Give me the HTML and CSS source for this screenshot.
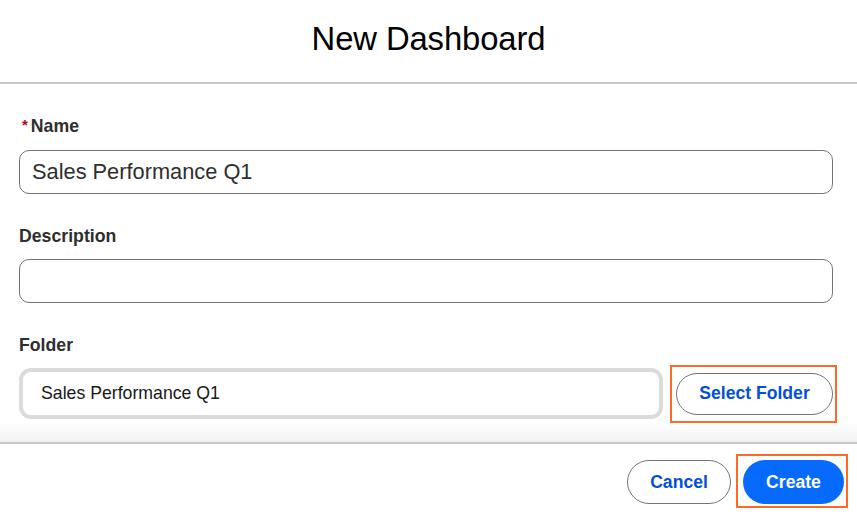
FILE: index.html
```html
<!DOCTYPE html>
<html lang="en">
<head>
<meta charset="utf-8">
<title>New Dashboard</title>
<link rel="stylesheet" href="styles.css">
</head>
<body>
<div class="modal">
  <header class="modal-header">
    <h1 class="modal-title">New Dashboard</h1>
  </header>
  <div class="modal-body">
    <div class="field">
      <label class="label"><abbr class="required">*</abbr>Name</label>
      <div class="input">Sales Performance Q1</div>
    </div>
    <div class="field">
      <label class="label">Description</label>
      <div class="input"></div>
    </div>
    <div class="field">
      <label class="label">Folder</label>
      <div class="folder-row">
        <div class="folder-input">Sales Performance Q1</div>
        <div class="highlight hl-select">
          <button class="btn btn-neutral btn-select">Select Folder</button>
        </div>
      </div>
    </div>
  </div>
  <footer class="modal-footer">
    <button class="btn btn-neutral btn-cancel">Cancel</button>
    <div class="highlight hl-create">
      <button class="btn btn-brand">Create</button>
    </div>
  </footer>
</div>
</body>
</html>
```

FILE: styles.css
```css
* { box-sizing: border-box; }
html, body { margin: 0; padding: 0; }
body {
  width: 857px;
  height: 518px;
  background: #ffffff;
  font-family: "Liberation Sans", Arial, sans-serif;
  color: #2e2e2e;
  overflow: hidden;
}
.modal {
  width: 857px;
  height: 518px;
  display: flex;
  flex-direction: column;
  background: #fff;
}
.modal-header {
  height: 84px;
  border-bottom: 2px solid #c9c9c9;
  padding-top: 20px;
  text-align: center;
}
.modal-title {
  margin: 0;
  font-weight: normal;
  font-size: 32.8px;
  line-height: 37px;
  color: #000;
  letter-spacing: -0.1px;
}
.modal-body {
  height: 360px;
  padding: 32px 24px 0 19px;
  display: flex;
  flex-direction: column;
  gap: 32px;
  background: linear-gradient(to bottom, #fff 0, #fff 339px, #f1f1f1 358px);
  border-bottom: 2px solid #c9c9c9;
}
.field {
  display: flex;
  flex-direction: column;
  gap: 13px;
}
.label {
  display: block;
  font-size: 17.7px;
  line-height: 20px;
  font-weight: bold;
  color: #2e2e2e;
}
.required {
  color: #ba0517;
  text-decoration: none;
  font-size: 15px;
  margin: 0 3px 0 3px;
  position: relative;
  top: -2px;
}
.input {
  height: 44px;
  border: 1px solid #747474;
  border-radius: 10px;
  padding: 0 12px;
  font-size: 21.8px;
  line-height: 42px;
  color: #2e2e2e;
}
.folder-row {
  display: flex;
  align-items: center;
  gap: 13px;
}
.folder-input {
  width: 644px;
  height: 51px;
  border: 4px solid #dddbda;
  border-radius: 12px;
  padding: 0 18px;
  font-size: 17.7px;
  line-height: 43px;
  color: #181818;
}
.btn {
  font-family: "Liberation Sans", Arial, sans-serif;
  font-weight: bold;
  font-size: 17.6px;
  border-radius: 22px;
  cursor: pointer;
  padding: 0;
}
.btn-neutral {
  background: #fff;
  border: 1px solid #747474;
  color: #0250d9;
}
.btn-select {
  width: 157px;
  height: 42px;
}
.highlight {
  position: relative;
  display: flex;
}
.highlight::after {
  content: "";
  position: absolute;
  border: 2px solid #fc6a25;
  pointer-events: none;
}
.hl-select::after {
  left: -6px; right: -4px; top: -8px; bottom: -8px;
}
.modal-footer {
  flex: 1;
  display: flex;
  justify-content: flex-end;
  align-items: flex-start;
  padding: 16px 13px 0 0;
  gap: 12px;
}
.btn-cancel {
  width: 104px;
  height: 44px;
}
.btn-brand {
  width: 101px;
  height: 44px;
  border: none;
  background: #066afe;
  color: #fff;
}
.hl-create::after {
  left: -7px; right: -4px; top: -6px; bottom: -4px;
}
```
